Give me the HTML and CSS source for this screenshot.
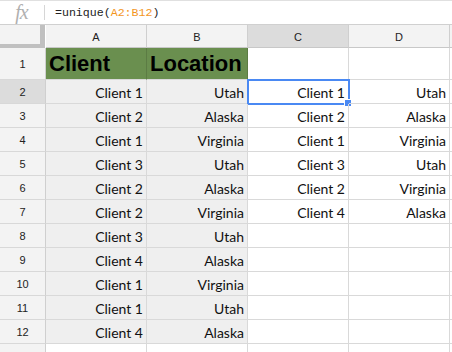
FILE: index.html
```html
<!DOCTYPE html>
<html>
<head>
<meta charset="utf-8">
<link rel="stylesheet" href="styles.css">
</head>
<body>
<div class="fbar">
  <span class="fx">fx</span>
  <span class="sep"></span>
  <span class="formula">=unique(<span class="ref">A2:B12</span>)</span>
</div>
<div class="sheet">
  <div class="corner"></div>
  <div class="ch">A</div><div class="ch">B</div><div class="ch sel">C</div><div class="ch">D</div><div class="ch last"></div>

  <div class="rh r1">1</div>
  <div class="c r1 green b">Client</div><div class="c r1 green b">Location</div><div class="c r1"></div><div class="c r1"></div><div class="c r1 last"></div>

  <div class="rh sel">2</div>
  <div class="c g">Client 1</div><div class="c g">Utah</div><div class="c active">Client 1<span class="handle"></span></div><div class="c">Utah</div><div class="c last"></div>

  <div class="rh">3</div>
  <div class="c g">Client 2</div><div class="c g">Alaska</div><div class="c">Client 2</div><div class="c">Alaska</div><div class="c last"></div>

  <div class="rh">4</div>
  <div class="c g">Client 1</div><div class="c g">Virginia</div><div class="c">Client 1</div><div class="c">Virginia</div><div class="c last"></div>

  <div class="rh">5</div>
  <div class="c g">Client 3</div><div class="c g">Utah</div><div class="c">Client 3</div><div class="c">Utah</div><div class="c last"></div>

  <div class="rh">6</div>
  <div class="c g">Client 2</div><div class="c g">Alaska</div><div class="c">Client 2</div><div class="c">Virginia</div><div class="c last"></div>

  <div class="rh">7</div>
  <div class="c g">Client 2</div><div class="c g">Virginia</div><div class="c">Client 4</div><div class="c">Alaska</div><div class="c last"></div>

  <div class="rh">8</div>
  <div class="c g">Client 3</div><div class="c g">Utah</div><div class="c"></div><div class="c"></div><div class="c last"></div>

  <div class="rh">9</div>
  <div class="c g">Client 4</div><div class="c g">Alaska</div><div class="c"></div><div class="c"></div><div class="c last"></div>

  <div class="rh">10</div>
  <div class="c g">Client 1</div><div class="c g">Virginia</div><div class="c"></div><div class="c"></div><div class="c last"></div>

  <div class="rh">11</div>
  <div class="c g">Client 1</div><div class="c g">Utah</div><div class="c"></div><div class="c"></div><div class="c last"></div>

  <div class="rh">12</div>
  <div class="c g">Client 4</div><div class="c g">Alaska</div><div class="c"></div><div class="c"></div><div class="c last"></div>

  <div class="rh">13</div>
  <div class="c"></div><div class="c"></div><div class="c"></div><div class="c"></div><div class="c last"></div>
</div>
</body>
</html>
```
FILE: styles.css
```css
html, body {
  margin: 0;
  padding: 0;
  width: 452px;
  height: 352px;
  overflow: hidden;
  background: #fff;
}
.fbar {
  border-top: 1px solid #e0e0e0;
  border-bottom: 1px solid #d0d0d0;
  box-sizing: border-box;
  height: 25px;
  display: flex;
  align-items: center;
  background: #fff;
}
.fx {
  font-family: "Liberation Serif", serif;
  font-style: italic;
  font-size: 20px;
  color: #b0b0b0;
  width: 45px;
  text-align: center;
  margin-left: -1px;
  letter-spacing: -1px;
}
.sep {
  width: 1px;
  height: 15px;
  background: #d6d6d6;
  margin-right: 10px;
}
.formula {
  font-family: "Liberation Mono", monospace;
  font-size: 11.6px;
  color: #222;
}
.ref { color: #f3961e; }
.sheet {
  display: grid;
  grid-template-columns: 46px 101px 101px 101px 101px 1fr;
  grid-template-rows: 23px 32px repeat(12, 24px);
  font-family: Arial, "Liberation Sans", sans-serif;
}
.corner {
  background: #f3f3f3;
  border-right: 5px solid #c0c0c0;
  border-bottom: 4px solid #c0c0c0;
  box-sizing: border-box;
  width: 45px;
}
.ch {
  background: #f3f3f3;
  border-right: 1px solid #cfcfcf;
  border-bottom: 1px solid #c8c8c8;
  font-size: 11px;
  color: #222;
  display: flex;
  align-items: center;
  justify-content: center;
  padding-top: 1px;
  box-sizing: border-box;
}
.ch.sel { background: #dcdcdc; }
.rh {
  background: #f3f3f3;
  border-right: 1px solid #cfcfcf;
  border-bottom: 1px solid #d8d8d8;
  font-size: 11px;
  color: #222;
  display: flex;
  align-items: center;
  justify-content: center;
  box-sizing: border-box;
}
.rh.sel { background: #dcdcdc; }
.c {
  position: relative;
  border-right: 1px solid #d9d9d9;
  border-bottom: 1px solid #d9d9d9;
  box-sizing: border-box;
  font-family: Lato, "Open Sans", sans-serif;
  font-size: 14px;
  color: #111;
  display: flex;
  align-items: flex-end;
  justify-content: flex-end;
  padding: 0 3px 2px 3px;
  white-space: nowrap;
}
.c.g { background: #efefef; }
.c.green {
  background: #6a8f4f;
  border-right-color: #5c7c44;
  border-bottom-color: #d9d9d9;
}
.c.b {
  font-family: Arial, "Liberation Sans", sans-serif;
  font-weight: bold;
  font-size: 22px;
  color: #000;
  justify-content: flex-start;
  padding: 0 2px 2px 3px;
}
.c.active {
  outline: 2px solid #4a89f3;
  outline-offset: -1px;
}
.handle {
  position: absolute;
  right: -4px;
  bottom: -4px;
  width: 6px;
  height: 6px;
  background: #4a89f3;
  border: 1px solid #fff;
}
.last { border-right: none; }
```
